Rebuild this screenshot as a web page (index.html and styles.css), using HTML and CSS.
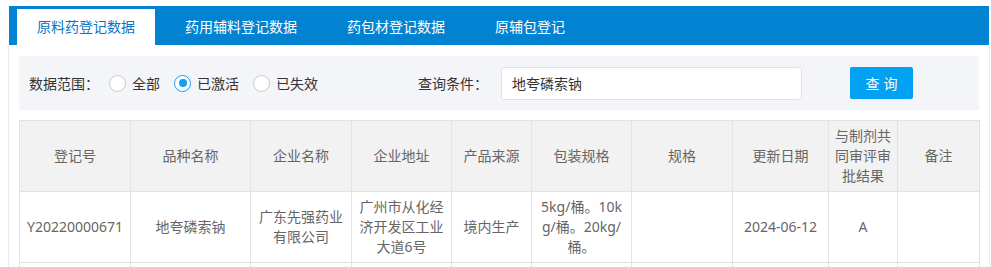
FILE: index.html
```html
<!DOCTYPE html>
<html lang="zh-CN">
<head>
<meta charset="utf-8">
<link rel="stylesheet" href="styles.css">
</head>
<body>
<div class="wrap">
  <div class="tabs">
    <div class="tab active">原料药登记数据</div>
    <div class="tab">药用辅料登记数据</div>
    <div class="tab">药包材登记数据</div>
    <div class="tab">原辅包登记</div>
  </div>
  <div class="content">
    <div class="filter">
      <span class="label">数据范围：</span>
      <label class="radio"><span class="circle"></span>全部</label>
      <label class="radio"><span class="circle on"></span>已激活</label>
      <label class="radio"><span class="circle"></span>已失效</label>
      <span class="label query-label">查询条件：</span>
      <div class="input">地夸磷索钠</div>
      <button class="btn">查询</button>
    </div>
    <table class="grid">
      <colgroup>
        <col class="c1"><col class="c2"><col class="c3"><col class="c4"><col class="c5">
        <col class="c6"><col class="c7"><col class="c8"><col class="c9"><col class="c10">
      </colgroup>
      <thead>
        <tr>
          <th>登记号</th>
          <th>品种名称</th>
          <th>企业名称</th>
          <th>企业地址</th>
          <th>产品来源</th>
          <th>包装规格</th>
          <th>规格</th>
          <th>更新日期</th>
          <th>与制剂共同审评审批结果</th>
          <th>备注</th>
        </tr>
      </thead>
      <tbody>
        <tr>
          <td>Y20220000671</td>
          <td>地夸磷索钠</td>
          <td>广东先强药业有限公司</td>
          <td>广州市从化经济开发区工业大道6号</td>
          <td>境内生产</td>
          <td>5kg/桶。10kg/桶。20kg/桶。</td>
          <td></td>
          <td>2024-06-12</td>
          <td>A</td>
          <td></td>
        </tr>
        <tr>
          <td></td><td></td><td></td><td></td><td></td>
          <td></td><td></td><td></td><td></td><td></td>
        </tr>
      </tbody>
    </table>
  </div>
</div>
</body>
</html>
```
FILE: styles.css
```css
* { box-sizing: border-box; }
html, body { margin: 0; padding: 0; background: #fff; }
body {
  font-family: "Noto Sans", "Noto Sans CJK SC", sans-serif;
  font-size: 14px;
  color: #333;
  overflow: hidden;
}
.wrap {
  margin: 6px 1px 0 8px;
}
.tabs {
  display: flex;
  align-items: flex-end;
  height: 39px;
  margin-left: 1px;
  margin-right: 1px;
  background: #0283d1;
  padding-left: 8px;
}
.tab {
  height: 36px;
  line-height: 36px;
  padding: 0 20px;
  margin-right: 10px;
  color: #fff;
  white-space: nowrap;
}
.tab.active {
  background: #fff;
  color: #0a74c6;
}
.content {
  border-left: 1px solid #e8ecf2;
  border-right: 1px solid #e8ecf2;
  padding: 11px 10px 0 10px;
  height: 222px;
  overflow: hidden;
}
.filter {
  display: flex;
  align-items: center;
  height: 54px;
  background: #f4f5f9;
  padding-left: 10px;
}
.label { margin-right: 10px; white-space: nowrap; }
.radio {
  display: flex;
  align-items: center;
  margin-right: 14px;
  white-space: nowrap;
}
.circle {
  width: 17px;
  height: 17px;
  border: 1px solid #c9c9c9;
  border-radius: 50%;
  background: #fff;
  margin-right: 6px;
  display: flex;
  align-items: center;
  justify-content: center;
}
.circle.on { border-color: #1a9af0; }
.circle.on::after {
  content: "";
  width: 8px;
  height: 8px;
  border-radius: 50%;
  background: #1a9af0;
}
.query-label { margin-left: 86px; margin-right: 13px; }
.input {
  width: 301px;
  height: 33px;
  border: 1px solid #dfe2e8;
  border-radius: 3px;
  background: #fff;
  padding: 0 10px;
  line-height: 31px;
  color: #333;
}
.btn {
  margin-left: 48px;
  width: 63px;
  height: 32px;
  border: none;
  border-radius: 2px;
  background: #03a1f2;
  color: #fff;
  font-family: inherit;
  font-size: 14px;
  letter-spacing: 4px;
  padding: 0 0 0 4px;
}
.grid {
  margin-top: 10px;
  width: 960px;
  border-collapse: collapse;
  table-layout: fixed;
  color: #666;
}
.c1 { width: 111px; }
.c2 { width: 120px; }
.c3 { width: 101px; }
.c4 { width: 100px; }
.c5 { width: 80px; }
.c6 { width: 100px; }
.c7 { width: 101px; }
.c8 { width: 96px; }
.c9 { width: 69px; }
.c10 { width: 82px; }
.grid th, .grid td {
  border: 1px solid #e3e3e3;
  padding: 5px 6px;
  height: 71px;
  line-height: 20px;
  text-align: center;
  vertical-align: middle;
  word-break: break-all;
  font-weight: normal;
}
.grid th {
  background: #f2f2f2;
  color: #666;
}
```
